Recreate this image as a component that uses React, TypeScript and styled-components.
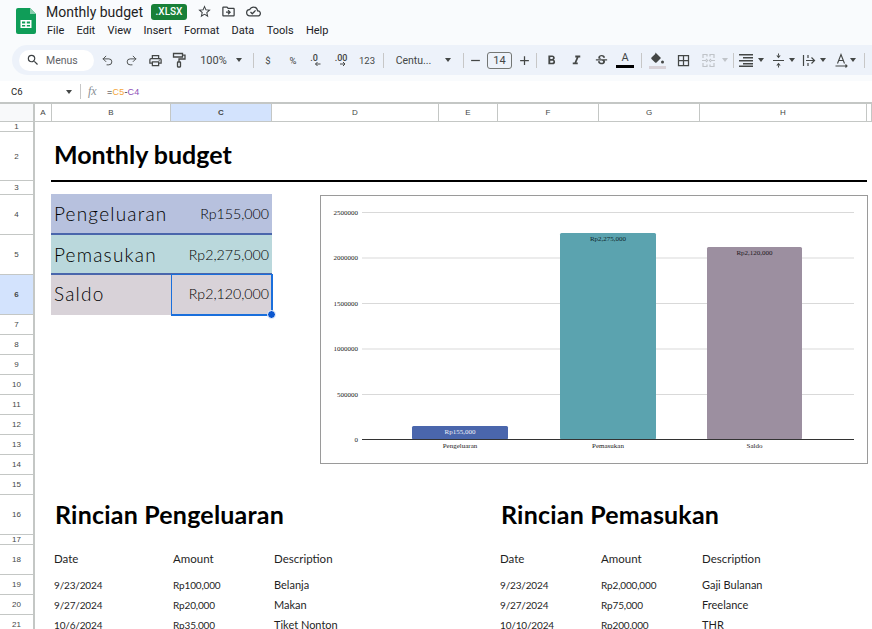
import React from "react";
import styled, { createGlobalStyle } from "styled-components";
import { Redo2, Undo2 } from "lucide-react";
import {
  MdAdd,
  MdBorderAll,
  MdFormatBold,
  MdFormatItalic,
  MdOutlineCloudDone,
  MdOutlineDriveFileMove,
  MdOutlinePrint,
  MdOutlineStarBorder,
  MdRemove,
  MdSearch,
  MdStrikethroughS,
} from "react-icons/md";

const GlobalStyle = createGlobalStyle`
  html, body {
    margin: 0;
    padding: 0;
    height: 629px;
    overflow: hidden;
    background: #fff;
    font-family: Roboto, "Liberation Sans", sans-serif;
  }
`;

const GOTHIC = `Lato, "Open Sans", sans-serif`;

const Page = styled.div`
  width: 872px;
  height: 629px;
  overflow: hidden;
  display: flex;
  flex-direction: column;
`;

/* ---------- title bar ---------- */
const TopBar = styled.header`
  height: 45px;
  background: #f9fbfd;
  display: flex;
  padding-left: 16px;
  box-sizing: border-box;
`;
const LogoWrap = styled.div`
  width: 30px;
  padding-top: 8px;
`;
const TitleBlock = styled.div`
  display: flex;
  flex-direction: column;
`;
const TitleRow = styled.div`
  height: 23px;
  display: flex;
  align-items: center;
  padding-top: 1px;
  box-sizing: border-box;
  color: #1f1f1f;
`;
const DocName = styled.span`
  font-size: 14px;
  line-height: 22px;
  width: 105px;
`;
const Badge = styled.span`
  width: 36px;
  height: 16px;
  background: #188038;
  border-radius: 3px;
  color: #fff;
  font-size: 10px;
  font-weight: 500;
  line-height: 16px;
  text-align: center;
  margin-right: 5px;
`;
const TitleIcon = styled.span`
  width: 24.5px;
  height: 16px;
  display: flex;
  justify-content: center;
  color: #3c4043;
  font-size: 15px;
`;
const MenuRow = styled.nav`
  display: flex;
  gap: 12.3px;
  font-size: 11px;
  line-height: 14px;
  color: #202124;
  padding: 1px 0 0 1px;
`;

/* ---------- toolbar ---------- */
const ToolbarBand = styled.div`
  height: 36px;
  background: #f9fbfd;
  padding-left: 12px;
  box-sizing: border-box;
`;
const Toolbar = styled.div`
  width: 880px;
  height: 30px;
  background: #edf2fa;
  border-radius: 15px 0 0 15px;
  display: flex;
  align-items: center;
  padding-left: 7px;
  box-sizing: border-box;
  color: #444746;
`;
const SearchPill = styled.div`
  width: 75px;
  height: 21px;
  border-radius: 11px;
  background: #fff;
  display: flex;
  align-items: center;
  padding-left: 7px;
  gap: 6px;
  box-sizing: border-box;
  font-size: 10.5px;
  color: #5f6368;
  flex: none;
  svg {
    font-size: 14px;
    color: #3c4043;
  }
`;
const Tool = styled.div<{ $w: number; $muted?: boolean; $size?: number }>`
  width: ${(p) => p.$w}px;
  flex: none;
  height: 24px;
  display: flex;
  align-items: center;
  justify-content: center;
  font-size: ${(p) => p.$size ?? 15}px;
  color: ${(p) => (p.$muted ? "#c0c4c9" : "#444746")};
  svg {
    flex: none;
  }
`;
const ToolText = styled(Tool)`
  font-size: ${(p) => p.$size ?? 11}px;
`;
const Caret = styled.span<{ $muted?: boolean }>`
  width: 0;
  height: 0;
  flex: none;
  border-left: 3.5px solid transparent;
  border-right: 3.5px solid transparent;
  border-top: 4px solid ${(p) => (p.$muted ? "#c0c4c9" : "#444746")};
`;
const Divider = styled.span`
  width: 1px;
  height: 15px;
  background: #c7c7c7;
  flex: none;
`;
const SizeBox = styled.div`
  width: 25px;
  height: 17px;
  border: 1px solid #747775;
  border-radius: 3px;
  box-sizing: border-box;
  text-align: center;
  font-size: 11px;
  line-height: 15px;
  color: #444746;
  flex: none;
`;
const Swatch = styled.div<{ $color: string; $w: number; $bar: number }>`
  width: ${(p) => p.$w}px;
  flex: none;
  height: 24px;
  display: flex;
  flex-direction: column;
  align-items: center;
  justify-content: center;
  font-size: 11px;
  line-height: 12px;
  color: #444746;
  &::after {
    content: "";
    width: ${(p) => p.$bar}px;
    height: 3px;
    margin-top: 1px;
    background: ${(p) => p.$color};
  }
`;

/* ---------- formula bar ---------- */
const FormulaBar = styled.div`
  height: 21px;
  display: flex;
  align-items: center;
  background: #fff;
  font-size: 10px;
  color: #444746;
  flex: none;
`;
const NameBox = styled.div`
  width: 80px;
  height: 100%;
  display: flex;
  align-items: center;
  justify-content: space-between;
  padding: 0 8px 0 11px;
  box-sizing: border-box;
  font-size: 9.5px;
  color: #1f1f1f;
`;
const FxLabel = styled.span`
  font-family: "Liberation Serif", serif;
  font-style: italic;
  font-size: 12px;
  color: #8a8f94;
  width: 19px;
  margin-left: 7px;
`;
const Formula = styled.span`
  font-family: "Liberation Sans", sans-serif;
  font-size: 9px;
  letter-spacing: 0.2px;
  color: #1f1f1f;
`;
const Ref = styled.span<{ $color: string }>`
  color: ${(p) => p.$color};
`;

/* ---------- sheet ---------- */
const Sheet = styled.div`
  position: relative;
  flex: 1;
  min-height: 0;
  border-top: 2px solid #c4c7c5;
  overflow: hidden;
  display: grid;
  grid-template-columns: 35px 17px 119px 101px 167px 59px 101px 101px 167px 5px;
  grid-template-rows: 18px 10px 49px 14px 40px 40px 40px repeat(9, 20px) 40px 10px 30px 20px 20px 20px;
`;
const Corner = styled.div`
  grid-column: 1;
  grid-row: 1;
  background: #f8f9fa;
  border-right: 2px solid #c4c7c5;
  border-bottom: 1px solid #c4c7c5;
  box-sizing: border-box;
`;
const ColHead = styled.div<{ $col: number; $active?: boolean }>`
  grid-column: ${(p) => p.$col};
  grid-row: 1;
  background: ${(p) => (p.$active ? "#d3e3fd" : "#fff")};
  border-right: 1px solid #c4c7c5;
  border-bottom: 1px solid #c4c7c5;
  box-sizing: border-box;
  display: flex;
  align-items: center;
  justify-content: center;
  font-family: "Liberation Sans", sans-serif;
  font-size: 8px;
  font-weight: ${(p) => (p.$active ? 700 : 400)};
  color: #444746;
`;
const RowHead = styled.div<{ $row: number; $active?: boolean }>`
  grid-column: 1;
  grid-row: ${(p) => p.$row};
  background: ${(p) => (p.$active ? "#d3e3fd" : "#fff")};
  border-right: 2px solid #c4c7c5;
  border-bottom: 1px solid #c4c7c5;
  box-sizing: border-box;
  display: flex;
  align-items: center;
  justify-content: center;
  font-family: "Liberation Sans", sans-serif;
  font-size: 8px;
  font-weight: ${(p) => (p.$active ? 700 : 400)};
  color: #444746;
  overflow: hidden;
`;
const Cell = styled.div<{ $col: number; $row: number }>`
  grid-column: ${(p) => p.$col};
  grid-row: ${(p) => p.$row};
  display: flex;
  align-items: center;
  padding: 0 3px 0 2px;
  white-space: nowrap;
  font-family: ${GOTHIC};
  color: #1f1f1f;
  min-width: 0;
`;
const SheetTitle = styled(Cell)`
  grid-column: 3 / 10;
  font-size: 25px;
  font-weight: 700;
  color: #000;
  padding-bottom: 5px;
`;
const SectionTitle = styled(Cell)`
  font-size: 25px;
  font-weight: 700;
  letter-spacing: 0.2px;
  color: #000;
  padding-left: 3px;
  padding-bottom: 2px;
`;
const TitleRule = styled.div`
  grid-column: 2 / 10;
  grid-row: 4;
  margin-left: 16px;
  height: 2px;
  margin-top: -1px;
  background: #000;
`;
const Summary = styled(Cell)<{ $bg: string; $line?: boolean; $first?: boolean }>`
  background: ${(p) => p.$bg};
  color: #000;
  font-size: 19px;
  font-weight: 300;
  letter-spacing: 1.2px;
  border-bottom: ${(p) => (p.$line ? "2px solid #4a66ac" : "none")};
  padding-bottom: ${(p) => (p.$line ? 0 : 3)}px;
  margin-top: ${(p) => (p.$first ? -1 : 0)}px;
  box-sizing: border-box;
`;
const SummaryLabel = styled(Summary)`
  margin-left: 16px;
  grid-column: 2 / 4;
  padding-left: 3px;
`;
const SummaryValue = styled(Summary)`
  justify-content: flex-end;
  font-size: 14.2px;
  letter-spacing: 0;
`;
const TableHead = styled(Cell)`
  font-size: 11.5px;
  padding-bottom: 3px;
`;
const TableCell = styled(Cell)<{ $num?: boolean }>`
  font-size: ${(p) => (p.$num ? 10 : 11)}px;
  letter-spacing: ${(p) => (p.$num ? -0.15 : 0)}px;
  padding-bottom: 1px;
`;
const Selection = styled.div`
  grid-column: 4;
  grid-row: 7;
  border: solid #1a6fdc;
  border-width: 1px 2px 2px 1px;
  margin: -1px -1px -1px 0;
  pointer-events: none;
  position: relative;
  &::after {
    content: "";
    position: absolute;
    right: -5px;
    bottom: -5px;
    width: 7px;
    height: 7px;
    border-radius: 50%;
    background: #0b57d0;
    border: 1px solid #fff;
  }
`;
const ChartFrame = styled.div`
  position: absolute;
  left: 320px;
  top: 91px;
  width: 548px;
  height: 269px;
  box-sizing: border-box;
  border: 1px solid #9a9a9a;
  background: #fff;
  svg {
    display: block;
  }
`;

const LogoIcon = () => (
  <svg width="20" height="26" viewBox="0 0 20 26">
    <path d="M2 0h12l6 6v18a2 2 0 0 1-2 2H2a2 2 0 0 1-2-2V2a2 2 0 0 1 2-2z" fill="#0f9d58" />
    <path d="M14 0l6 6h-6z" fill="#87ceac" />
    <path d="M4.5 12h11v8h-11z M6 13.500v2h3.200v-2z M10.800 13.500v2H14v-2z M6 17v1.500h3.200V17z M10.800 17v1.500H14V17z" fill="#fff" fillRule="evenodd" />
  </svg>
);

const DecimalIcon = ({ label, dir }: { label: string; dir: "left" | "right" }) => (
  <svg width="22" height="18" viewBox="0 0 22 18">
    <text x="10" y="9.500" textAnchor="middle" fontSize="9" fontWeight="500" fontFamily="Roboto" fill="#444746">
      {label}
    </text>
    {dir === "left" ? (
      <path d="M16.500 13h-5M13.500 11l-2 2 2 2" fill="none" stroke="#444746" strokeWidth="1" />
    ) : (
      <path d="M9 13h5M12 11l2 2-2 2" fill="none" stroke="#444746" strokeWidth="1" />
    )}
  </svg>
);

const PaintIcon = () => (
  <svg width="15" height="16" viewBox="0 0 15 16" fill="none" stroke="#444746" strokeWidth="1.300">
    <path d="M1.500 1.500h9v3.500h-9z" />
    <path d="M10.500 3.200h2.500v3.800H7v3" />
    <rect x="5.500" y="10" width="3" height="5" rx="0.500" />
  </svg>
);

const AlignIcon = () => (
  <svg width="14" height="14" viewBox="0 0 14 14" fill="#444746">
    <path d="M0 1h14v1.500H0zM4 4h10v1.500H4zM0 7h14v1.500H0zM4 10h10v1.500H4zM0 12.500h14V14H0z" />
  </svg>
);

const ValignIcon = () => (
  <svg width="13" height="15" viewBox="0 0 13 15" fill="#444746">
    <path d="M1 7h11v1H1z" />
    <path d="M6.500 0.500v2M6.500 12.500v2" stroke="#444746" />
    <path d="M4.300 2.500h4.400L6.500 5.200zM4.300 12.500h4.400L6.500 9.800z" />
  </svg>
);

const MergeIcon = () => (
  <svg width="15" height="15" viewBox="0 0 15 15" fill="none" stroke="#c0c4c9" strokeWidth="1.200">
    <path d="M2 5V1.500h4v2M13 5V1.500H9v2M2 10v3.500h4v-2M13 10v3.500H9v-2" />
    <path d="M1 7.500h4M5 6l1.500 1.500L5 9M14 7.500h-4M10 6L8.500 7.500 10 9" />
  </svg>
);

const WrapIcon = () => (
  <svg width="15" height="15" viewBox="0 0 15 15" fill="none" stroke="#444746" strokeWidth="1.200">
    <path d="M1.500 2v11M6 2v3M6 10v3" />
    <path d="M4 7.500h8.500M9.500 4.500l3 3-3 3" />
  </svg>
);

const RotateIcon = () => (
  <svg width="15" height="15" viewBox="0 0 15 15" fill="none" stroke="#444746" strokeWidth="1.100">
    <path d="M3.500 10.500L7 1.500l3.500 9M5 7.500h4" />
    <path d="M1.500 13h11.500M11.500 11.500L13 13l-1.500 1.500" />
  </svg>
);

const FillIcon = () => (
  <svg width="15" height="13" viewBox="0 0 15 13">
    <path d="M5.500 0.500l5.500 5.500-4.500 4.500a1 1 0 0 1-1.400 0L1.500 6.900a1 1 0 0 1 0-1.400L5.200 2z" fill="#444746" />
    <circle cx="12.500" cy="10" r="1.500" fill="#444746" />
  </svg>
);

const COLUMNS = ["A", "B", "C", "D", "E", "F", "G", "H", "I"];
const MENUS = ["File", "Edit", "View", "Insert", "Format", "Data", "Tools", "Help"];

const Y_TICKS = [
  { label: "2500000", y: 16.5 },
  { label: "2000000", y: 62 },
  { label: "1500000", y: 107.5 },
  { label: "1000000", y: 153 },
  { label: "500000", y: 198.5 },
];

const BARS = [
  { name: "Pengeluaran", value: "Rp155,000", x: 91, w: 96, top: 230, color: "#4a66ac", text: "#eef1f8" },
  { name: "Pemasukan", value: "Rp2,275,000", x: 239, w: 96, top: 37, color: "#5ba3af", text: "#10282c" },
  { name: "Saldo", value: "Rp2,120,000", x: 386, w: 95, top: 51, color: "#9c8fa0", text: "#1c1820" },
];

const BudgetChart = () => (
  <svg width="546" height="267" viewBox="0 0 546 267" fontFamily="Liberation Serif" fontSize="7">
    {Y_TICKS.map((t) => (
      <g key={t.label}>
        <line x1="41" x2="533" y1={t.y} y2={t.y} stroke="#d9d9d9" strokeWidth="1" />
        <text x="37" y={t.y + 2} textAnchor="end" fill="#222">
          {t.label}
        </text>
      </g>
    ))}
    <text x="37" y="245.500" textAnchor="end" fill="#222">
      0
    </text>
    {BARS.map((b) => (
      <g key={b.name}>
        <rect x={b.x} y={b.top} width={b.w} height={243.5 - b.top} rx="1.500" fill={b.color} />
        <text x={b.x + b.w / 2} y={b.top + 8} textAnchor="middle" fill={b.text}>
          {b.value}
        </text>
        <text x={b.x + b.w / 2} y="252" textAnchor="middle" fill="#222">
          {b.name}
        </text>
      </g>
    ))}
    <line x1="41" x2="533" y1="243.500" y2="243.500" stroke="#333" strokeWidth="1" />
  </svg>
);

const EXPENSES = [
  ["9/23/2024", "Rp100,000", "Belanja"],
  ["9/27/2024", "Rp20,000", "Makan"],
  ["10/6/2024", "Rp35,000", "Tiket Nonton"],
];
const INCOME = [
  ["9/23/2024", "Rp2,000,000", "Gaji Bulanan"],
  ["9/27/2024", "Rp75,000", "Freelance"],
  ["10/10/2024", "Rp200,000", "THR"],
];

export default function App() {
  return (
    <Page>
      <GlobalStyle />
      <TopBar>
        <LogoWrap>
          <LogoIcon />
        </LogoWrap>
        <TitleBlock>
          <TitleRow>
            <DocName>Monthly budget</DocName>
            <Badge>.XLSX</Badge>
            <TitleIcon>
              <MdOutlineStarBorder />
            </TitleIcon>
            <TitleIcon>
              <MdOutlineDriveFileMove />
            </TitleIcon>
            <TitleIcon>
              <MdOutlineCloudDone />
            </TitleIcon>
          </TitleRow>
          <MenuRow>
            {MENUS.map((m) => (
              <span key={m}>{m}</span>
            ))}
          </MenuRow>
        </TitleBlock>
      </TopBar>

      <ToolbarBand>
        <Toolbar>
          <SearchPill>
            <MdSearch />
            Menus
          </SearchPill>
          <Tool $w={1} />
          <Tool $w={24}><Undo2 size={13} strokeWidth={1.7} /></Tool>
          <Tool $w={24}><Redo2 size={13} strokeWidth={1.7} /></Tool>
          <Tool $w={24}><MdOutlinePrint /></Tool>
          <Tool $w={24}><PaintIcon /></Tool>
          <ToolText $w={45}>100%</ToolText>
          <Tool $w={6}><Caret /></Tool>
          <Tool $w={11} />
          <Divider />
          <ToolText $w={28} $size={9.5}>$</ToolText>
          <ToolText $w={22} $size={9.5}>%</ToolText>
          <Tool $w={22}><DecimalIcon label=".0" dir="left" /></Tool>
          <Tool $w={32}><DecimalIcon label=".00" dir="right" /></Tool>
          <ToolText $w={18} $size={9.5}>123</ToolText>
          <Tool $w={7} />
          <Divider />
          <ToolText $w={59} $size={10.5}>Centu...</ToolText>
          <Tool $w={10}><Caret /></Tool>
          <Tool $w={10} />
          <Divider />
          <Tool $w={22}><MdRemove /></Tool>
          <Tool $w={1} />
          <SizeBox>14</SizeBox>
          <Tool $w={24}><MdAdd /></Tool>
          <Divider />
          <Tool $w={28}><MdFormatBold /></Tool>
          <Tool $w={22}><MdFormatItalic /></Tool>
          <Tool $w={28}><MdStrikethroughS /></Tool>
          <Swatch $w={20} $bar={18} $color="#000">A</Swatch>
          <Tool $w={6} />
          <Divider />
          <Swatch $w={30} $bar={17} $color="#d8d2d8"><FillIcon /></Swatch>
          <Tool $w={22}><MdBorderAll /></Tool>
          <Tool $w={28} $muted><MergeIcon /></Tool>
          <Tool $w={6}><Caret $muted /></Tool>
          <Tool $w={5} />
          <Divider />
          <Tool $w={24}><AlignIcon /></Tool>
          <Tool $w={6}><Caret /></Tool>
          <Tool $w={6} />
          <Tool $w={16}><ValignIcon /></Tool>
          <Tool $w={12}><Caret /></Tool>
          <Tool $w={22}><WrapIcon /></Tool>
          <Tool $w={6}><Caret /></Tool>
          <Tool $w={7} />
          <Tool $w={16}><RotateIcon /></Tool>
          <Tool $w={8}><Caret /></Tool>
          <Tool $w={7} />
          <Divider />
        </Toolbar>
      </ToolbarBand>

      <FormulaBar>
        <NameBox>
          C6
          <Caret />
        </NameBox>
        <Divider />
        <FxLabel>fx</FxLabel>
        <Formula>
          =<Ref $color="#f5a63a">C5</Ref>-<Ref $color="#8e4fb8">C4</Ref>
        </Formula>
      </FormulaBar>

      <Sheet>
        <Corner />
        {COLUMNS.map((c, i) => (
          <ColHead key={c} $col={i + 2} $active={c === "C"}>
            {c === "I" ? "" : c}
          </ColHead>
        ))}
        {Array.from({ length: 21 }, (_, i) => (
          <RowHead key={i} $row={i + 2} $active={i + 1 === 6}>
            {i + 1}
          </RowHead>
        ))}

        <SheetTitle $col={3} $row={3}>Monthly budget</SheetTitle>
        <TitleRule />

        <SummaryLabel $col={2} $row={5} $bg="#b7c1de" $line $first>Pengeluaran</SummaryLabel>
        <SummaryValue $col={4} $row={5} $bg="#b7c1de" $line $first>Rp155,000</SummaryValue>
        <SummaryLabel $col={2} $row={6} $bg="#bad8dc" $line>Pemasukan</SummaryLabel>
        <SummaryValue $col={4} $row={6} $bg="#bad8dc" $line>Rp2,275,000</SummaryValue>
        <SummaryLabel $col={2} $row={7} $bg="#d8d2d8">Saldo</SummaryLabel>
        <SummaryValue $col={4} $row={7} $bg="#d8d2d8">Rp2,120,000</SummaryValue>
        <Selection />

        <SectionTitle $col={3} $row={17}>Rincian Pengeluaran</SectionTitle>
        <SectionTitle $col={7} $row={17}>Rincian Pemasukan</SectionTitle>

        <TableHead $col={3} $row={19}>Date</TableHead>
        <TableHead $col={4} $row={19}>Amount</TableHead>
        <TableHead $col={5} $row={19}>Description</TableHead>
        <TableHead $col={7} $row={19}>Date</TableHead>
        <TableHead $col={8} $row={19}>Amount</TableHead>
        <TableHead $col={9} $row={19}>Description</TableHead>

        {EXPENSES.map((r, i) =>
          r.map((v, j) => (
            <TableCell key={`e${i}${j}`} $col={3 + j} $row={20 + i} $num={j < 2}>{v}</TableCell>
          ))
        )}
        {INCOME.map((r, i) =>
          r.map((v, j) => (
            <TableCell key={`i${i}${j}`} $col={7 + j} $row={20 + i} $num={j < 2}>{v}</TableCell>
          ))
        )}

        <ChartFrame>
          <BudgetChart />
        </ChartFrame>
      </Sheet>
    </Page>
  );
}
